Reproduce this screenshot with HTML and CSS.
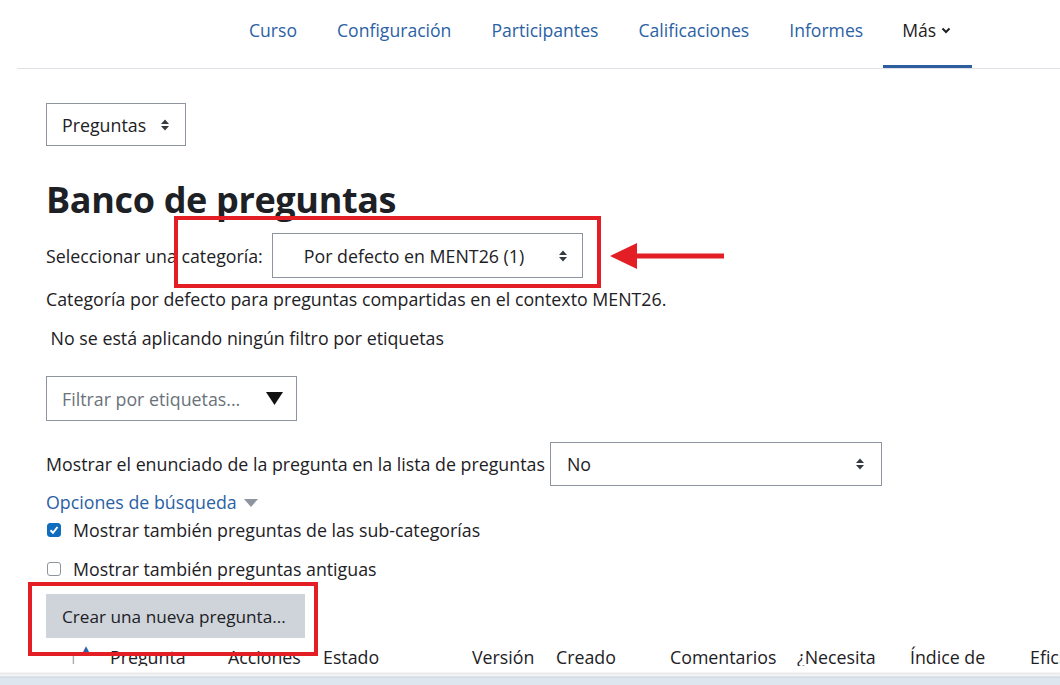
FILE: index.html
```html
<!DOCTYPE html>
<html lang="es">
<head>
    <meta charset="UTF-8">
    <meta name="viewport" content="width=device-width, initial-scale=1.0">
    <title>Banco de preguntas</title>
    <link rel="stylesheet" href="styles.css">
</head>
<body>
    <header class="topbar">
        <nav class="secondary-nav">
            <a href="#" class="nav-link">Curso</a>
            <a href="#" class="nav-link">Configuración</a>
            <a href="#" class="nav-link">Participantes</a>
            <a href="#" class="nav-link">Calificaciones</a>
            <a href="#" class="nav-link">Informes</a>
            <a href="#" class="nav-link active">Más
                <svg class="chevron" width="10" height="7" viewBox="0 0 10 7"><polyline points="1.5,1.5 5,5 8.5,1.5" fill="none" stroke="#1d2125" stroke-width="2"/></svg>
            </a>
        </nav>
    </header>

    <main class="content">
        <div class="select select-nav">
            <span>Preguntas</span>
            <svg class="updown" width="10" height="14" viewBox="0 0 10 14"><polygon points="1,6 5,1.5 9,6" fill="#343a40"/><polygon points="1,8 5,12.5 9,8" fill="#343a40"/></svg>
        </div>

        <h1 class="page-title">Banco de preguntas</h1>

        <div class="form-row category-row">
            <label>Seleccionar una categoría:</label>
            <div class="select select-category">
                <span>Por defecto en MENT26 (1)</span>
                <svg class="updown" width="10" height="14" viewBox="0 0 10 14"><polygon points="1,6 5,1.5 9,6" fill="#343a40"/><polygon points="1,8 5,12.5 9,8" fill="#343a40"/></svg>
            </div>
        </div>

        <p class="info category-info">Categoría por defecto para preguntas compartidas en el contexto MENT26.</p>
        <p class="info tag-info">&nbsp;No se está aplicando ningún filtro por etiquetas</p>

        <div class="tag-filter">
            <span>Filtrar por etiquetas...</span>
            <svg width="17" height="13" viewBox="0 0 17 13"><polygon points="0,0 17,0 8.5,13" fill="#111"/></svg>
        </div>

        <div class="form-row showtext-row">
            <label>Mostrar el enunciado de la pregunta en la lista de preguntas</label>
            <div class="select select-showtext">
                <span>No</span>
                <svg class="updown" width="10" height="14" viewBox="0 0 10 14"><polygon points="1,6 5,1.5 9,6" fill="#343a40"/><polygon points="1,8 5,12.5 9,8" fill="#343a40"/></svg>
            </div>
        </div>

        <a href="#" class="search-toggle">Opciones de búsqueda
            <svg width="14" height="8" viewBox="0 0 14 8"><polygon points="0,0 14,0 7,8" fill="#8f959e"/></svg>
        </a>

        <label class="check check-first">
            <span class="box checked">
                <svg width="14" height="14" viewBox="0 0 14 14"><polyline points="3.5,7.2 6,9.8 10.5,4" fill="none" stroke="#fff" stroke-width="2"/></svg>
            </span>
            Mostrar también preguntas de las sub-categorías
        </label>
        <label class="check check-second">
            <span class="box"></span>
            Mostrar también preguntas antiguas
        </label>

        <button type="button" class="btn-create">Crear una nueva pregunta...</button>

        <div class="table-head">
            <div class="col col-sort"><span class="sort-t">T</span><span class="sort-arrow">▲</span></div>
            <div class="col col-question">Pregunta</div>
            <div class="col col-actions">Acciones</div>
            <div class="col col-status">Estado</div>
            <div class="col col-version">Versión</div>
            <div class="col col-created">Creado</div>
            <div class="col col-comments">Comentarios</div>
            <div class="col col-needs">¿Necesita</div>
            <div class="col col-index">Índice de</div>
            <div class="col col-eff">Efici</div>
        </div>
    </main>

    <!-- marcas rojas de la captura -->
    <div class="mark mark-category"></div>
    <div class="mark mark-button"></div>
    <svg class="mark-arrow" width="114" height="28" viewBox="0 0 114 28">
        <polygon points="0,13 27,0 27,26" fill="#e31e24"/>
        <rect x="24" y="10.5" width="90" height="5" fill="#e31e24"/>
    </svg>

    <div class="screen-bottom"></div>
</body>
</html>
```

FILE: styles.css
```css
body {
    margin: 0;
    font-family: "Open Sans", "Noto Sans", Arial, sans-serif;
    font-size: 17.8px;
    line-height: 24px;
    color: #1d2125;
    background-color: #ffffff;
    overflow: hidden;
}
.topbar {
    margin-left: 17px;
    height: 68px;
    border-bottom: 1px solid #dee2e6;
}
.secondary-nav {
    display: flex;
    height: 68px;
    padding-left: 212px;
    font-size: 17.6px;
}
.nav-link {
    display: flex;
    align-items: flex-start;
    padding: 18px 20px 0;
    color: #2b61a5;
    text-decoration: none;
    box-sizing: border-box;
}
.nav-link.active {
    color: #1d2125;
    padding: 18px 21px 0 19px;
    box-shadow: inset 0 -3px 0 #2d5f9e;
}
.chevron {
    margin: 9px 0 0 5px;
}
.content {
    padding-left: 46px;
}
.select {
    display: flex;
    align-items: center;
    justify-content: space-between;
    border: 1px solid #8f959e;
    background-color: #ffffff;
    box-sizing: border-box;
}
.select-nav {
    margin-top: 34px;
    width: 140px;
    height: 43px;
    padding: 0 15px 0 15px;
}
.page-title {
    margin: 34px 0 0;
    font-size: 36px;
    line-height: 40px;
    font-weight: 700;
    letter-spacing: -0.35px;
}
.form-row {
    display: flex;
    align-items: center;
}
.category-row {
    margin-top: 13px;
    gap: 9px;
}
.select-category {
    width: 311px;
    height: 45px;
    padding: 0 14px 0 31px;
}
.info {
    margin: 0;
}
.category-info {
    margin-top: 9px;
}
.tag-info {
    margin-top: 15px;
}
.tag-filter {
    margin-top: 26px;
    width: 251px;
    height: 45px;
    border: 1px solid #8f959e;
    box-sizing: border-box;
    display: flex;
    align-items: center;
    justify-content: space-between;
    padding: 0 13px 0 15px;
    color: #6a737b;
}
.showtext-row {
    margin-top: 21px;
    gap: 5px;
}
.select-showtext {
    width: 332px;
    height: 44px;
    padding: 0 16px 0 16px;
}
.search-toggle {
    display: flex;
    align-items: center;
    gap: 7px;
    width: max-content;
    margin-top: 4px;
    color: #2b61a5;
    text-decoration: none;
}
.search-toggle svg {
    margin-top: 2px;
}
.check {
    display: flex;
    align-items: center;
    gap: 12px;
    padding-left: 1px;
}
.check-first {
    margin-top: 4px;
}
.check-second {
    margin-top: 15px;
}
.box {
    width: 14px;
    height: 14px;
    border: 1px solid #8f959e;
    border-radius: 3px;
    box-sizing: border-box;
    display: flex;
    align-items: center;
    justify-content: center;
}
.box.checked {
    background-color: #0f6cbf;
    border-color: #0f6cbf;
}
.box.checked svg {
    flex: none;
}
.btn-create {
    display: block;
    margin-top: 13px;
    width: 259px;
    height: 44px;
    padding: 0 16px;
    text-align: left;
    white-space: nowrap;
    border: none;
    background-color: #ced4da;
    color: #1d2125;
    font-family: inherit;
    font-size: 17.2px;
}
.table-head {
    display: flex;
    margin-top: 7px;
    margin-left: -46px;
    white-space: nowrap;
}
.col {
    flex: none;
}
.col-sort {
    width: 40px;
    margin-left: 70px;
    position: relative;
}
.sort-t {
    color: #8f959e;
    font-size: 12px;
}
.sort-arrow {
    position: absolute;
    left: 11px;
    top: -9px;
    font-size: 10px;
    color: #2b61a5;
}
.col-question { width: 118px; }
.col-actions { width: 95px; }
.col-status { width: 149px; }
.col-version { width: 84px; }
.col-created { width: 114px; }
.col-comments { width: 127px; }
.col-needs { width: 113px; }
.col-index { width: 120px; }
.mark {
    position: absolute;
    border: 4px solid #e31e24;
    box-sizing: border-box;
}
.mark-category {
    left: 174px;
    top: 216px;
    width: 427px;
    height: 72px;
}
.mark-button {
    left: 28px;
    top: 582px;
    width: 290px;
    height: 74px;
}
.mark-arrow {
    position: absolute;
    left: 610px;
    top: 243px;
}
.screen-bottom {
    position: fixed;
    left: 0;
    right: 0;
    bottom: 0;
    height: 19px;
    background: linear-gradient(to bottom, #ffffff 0, #ffffff 6px, #e9e9e9 7px, #f5f5f5 10px, #c9d2dc 11px, #dde5ee 12px, #dde5ee 19px);
}
```
